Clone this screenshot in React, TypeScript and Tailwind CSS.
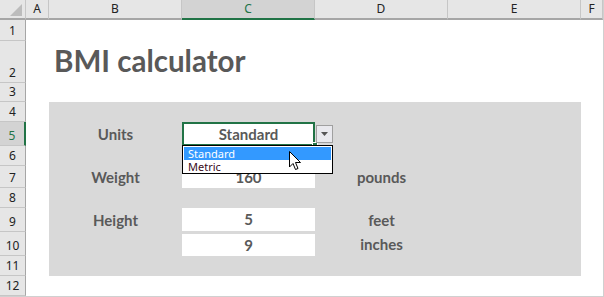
import React from "react";

const cols = ["A", "B", "C", "D", "E", "F"];
const rows = [1, 2, 3, 4, 5, 6, 7, 8, 9, 10, 11, 12];

const label = "flex items-center justify-center text-[15px] font-bold text-[#595959]";
const box = "flex items-center justify-center bg-white text-[15px] font-bold text-[#595959]";

export default function App() {
  return (
    <div
      className="relative grid h-[297px] w-[604px] grid-cols-[26px_23px_133px_133px_133px_133px_22px] grid-rows-[20px_21px_42px_19px_20px_24px_20px_22px_20px_24px_24px_20px_20px] overflow-hidden border-b border-r border-[#d0d0d0] bg-white"
      style={{ fontFamily: "Lato, 'Noto Sans', sans-serif" }}
    >
      {/* corner */}
      <div className="relative border-b-2 border-r border-b-[#a6a6a6] border-r-[#c6c6c6] bg-[#e6e6e6]">
        <svg className="absolute bottom-[2px] right-[3px]" width="12" height="12" viewBox="0 0 12 12">
          <polygon points="12,0 12,12 0,12" fill="#bcbcbc" />
        </svg>
      </div>

      {/* column headers */}
      {cols.map((c) => (
        <div
          key={c}
          className={
            c === "C"
              ? "flex items-center justify-center border-b-2 border-r border-b-[#217346] border-r-[#c6c6c6] bg-[#d3d3d3] text-[12px] text-[#217346]"
              : "flex items-center justify-center border-b-2 border-r border-b-[#a6a6a6] border-r-[#c6c6c6] bg-[#e6e6e6] text-[12px] text-[#222]"
          }
          style={{ fontFamily: "'Noto Sans', sans-serif" }}
        >
          {c}
        </div>
      ))}

      {/* row headers */}
      {rows.map((r) => (
        <div
          key={r}
          className={
            r === 5
              ? "col-start-1 flex items-end justify-center border-b border-r-2 border-b-[#c6c6c6] border-r-[#217346] bg-[#d3d3d3] pb-[2px] text-[12px] leading-[15px] text-[#217346]"
              : "col-start-1 flex items-end justify-center border-b border-r border-b-[#c6c6c6] border-r-[#a6a6a6] bg-[#e6e6e6] pb-[2px] text-[12px] leading-[15px] text-[#222]"
          }
          style={{ fontFamily: "'Noto Sans', sans-serif", gridRowStart: r + 1 }}
        >
          {r}
        </div>
      ))}

      {/* title */}
      <div className="col-start-3 col-end-6 row-start-3 flex items-end pb-[8px] pl-[5px] text-[29.5px] font-bold leading-none text-[#595959]">
        BMI calculator
      </div>

      {/* gray panel */}
      <div className="col-start-3 col-end-7 row-start-5 row-end-13 bg-[#d9d9d9]" />

      <div className={`col-start-3 row-start-6 ${label}`}>Units</div>
      <div className={`col-start-4 row-start-6 border-2 border-[#217346] ${box}`}>Standard</div>

      <div className={`col-start-3 row-start-8 ${label}`}>Weight</div>
      <div className={`col-start-4 row-start-8 ${box}`}>160</div>
      <div className={`col-start-5 row-start-8 ${label}`}>pounds</div>

      <div className={`col-start-3 row-start-10 ${label}`}>Height</div>
      <div className={`col-start-4 row-start-10 mb-px ${box}`}>5</div>
      <div className={`col-start-5 row-start-10 ${label}`}>feet</div>

      <div className={`col-start-4 row-start-11 mt-[2px] ${box}`}>9</div>
      <div className={`col-start-5 row-start-11 ${label}`}>inches</div>

      {/* fill handle */}
      <div className="absolute left-[312px] top-[142px] h-[6px] w-[6px] border border-white bg-[#217346]" />

      {/* dropdown button */}
      <div className="absolute left-[316px] top-[125px] flex h-[18px] w-[17px] items-center justify-center border border-[#a0a0a0] bg-[#e9e9ee]">
        <svg width="7" height="4" viewBox="0 0 7 4">
          <polygon points="0,0 7,0 3.5,4" fill="#555" />
        </svg>
      </div>

      {/* dropdown list */}
      <div
        className="absolute left-[182px] top-[145px] flex h-[29px] w-[151px] flex-col border border-black bg-white p-px text-[11px] leading-[13px]"
        style={{ fontFamily: "'Noto Sans', sans-serif" }}
      >
        <div className="h-[13px] overflow-hidden bg-[#3399ff] pl-[4px] text-white">Standard</div>
        <div className="h-[13px] overflow-hidden pl-[4px] text-[#3a0a1a]">Metric</div>
      </div>

      {/* mouse cursor */}
      <svg className="absolute left-[289px] top-[151px]" width="13" height="20" viewBox="0 0 13 20">
        <path
          d="M0.5 0.5 L0.5 16 L4 12.5 L6.5 18.5 L9 17.5 L6.5 11.5 L11.5 11.5 Z"
          fill="white"
          stroke="black"
          strokeWidth="1"
          strokeLinejoin="miter"
        />
      </svg>
    </div>
  );
}
